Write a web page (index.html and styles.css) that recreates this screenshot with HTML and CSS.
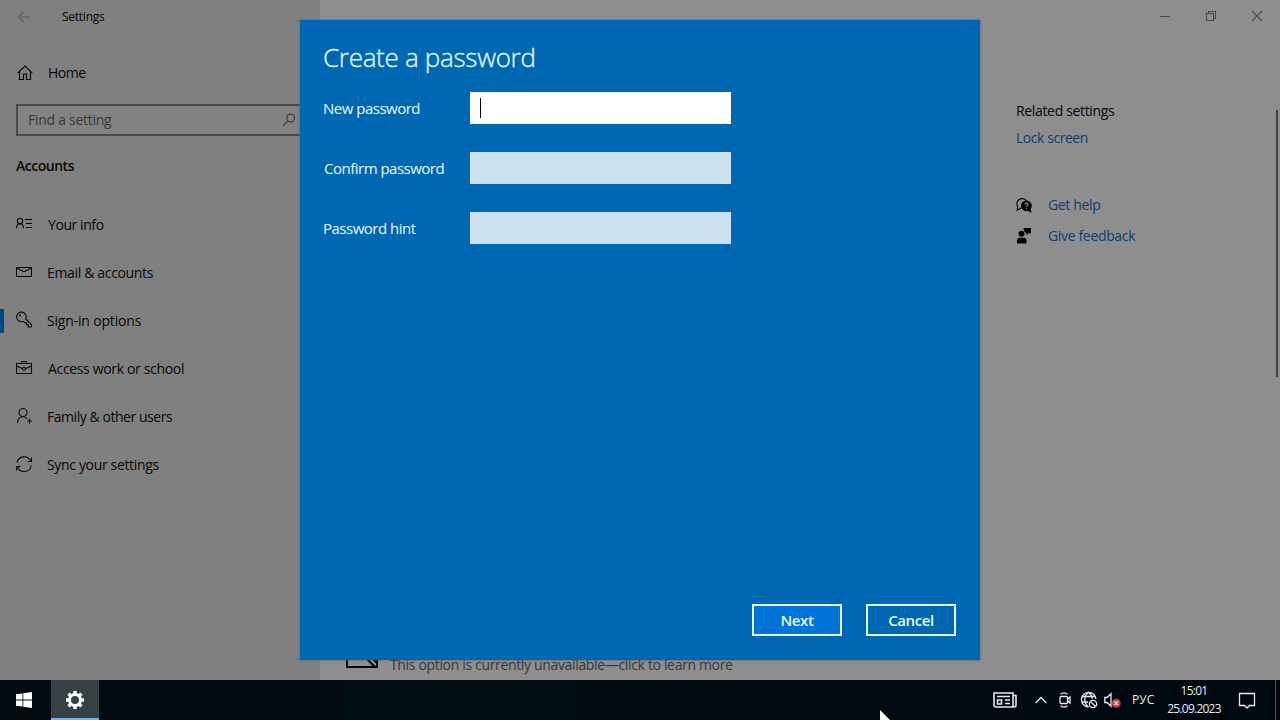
FILE: index.html
```html
<!DOCTYPE html>
<html lang="en">
<head>
    <meta charset="UTF-8">
    <meta name="viewport" content="width=device-width, initial-scale=1.0">
    <title>Settings</title>
    <link rel="stylesheet" href="styles.css">
</head>
<body>
<div class="window">
    <aside class="sidebar">
        <div class="title-bar">
            <svg class="back" width="14" height="12" viewBox="0 0 14 12"><path d="M13 6H1.5M6.5 1l-5 5 5 5"/></svg>
            <span class="app-name">Settings</span>
        </div>
        <a class="home" href="#">
            <svg width="16" height="16" viewBox="0 0 16 16"><path d="M.8 8L8 1l7.200 7M2.500 6.500v8h4V9h3v5.500h4v-8"/></svg>
            <span>Home</span>
        </a>
        <div class="search">
            <span>Find a setting</span>
            <svg width="14" height="14" viewBox="0 0 14 14"><circle cx="8.7" cy="5" r="3.9"/><path d="M5.8 7.8L1 12.8"/></svg>
        </div>
        <h2>Accounts</h2>
        <ul class="menu">
            <li><a href="#">
                <svg width="18" height="16" viewBox="0 0 18 16"><circle cx="4" cy="5" r="2.7"/><path d="M.5 12.3C.7 9.5 2 7.8 4 7.8s3.400 1.700 3.600 4.500M9 3.500h7M10 7.500h6M10 11.500h6"/></svg>
                <span class="info">Your info</span>
            </a></li>
            <li><a href="#">
                <svg width="18" height="16" viewBox="0 0 18 16"><path d="M.5 3.500h15v9H.5zM.5 4l7.500 3.700L15.500 4"/></svg>
                <span class="email">Email &amp; accounts</span>
            </a></li>
            <li class="active"><a href="#">
                <svg width="18" height="18" viewBox="0 0 18 18"><path d="M9.700 8l5.800 5.500v2.500h-3.200v-2.200h-1.800v-2h-2L7.300 10.300A4.800 4.800 0 1 1 9.700 8z"/><circle cx="4" cy="4.500" r=".6"/></svg>
                <span class="sign-in">Sign-in options</span>
            </a></li>
            <li><a href="#">
                <svg width="18" height="16" viewBox="0 0 18 16"><path d="M.5 3.500h15v10H.5zM5.500 3.500v-2h5v2M.5 6l5.700 2.500M9.800 8.500L15.500 6"/><circle cx="8" cy="8.800" r="1.500"/></svg>
                <span class="work">Access work or school</span>
            </a></li>
            <li><a href="#">
                <svg width="18" height="18" viewBox="0 0 18 18"><circle cx="7" cy="5.500" r="4"/><path d="M1.500 16c.2-4 2.300-6.300 5.500-6.300 1.800 0 3.200.8 4.200 2.300M13.500 11.500v5M11 14h5"/></svg>
                <span class="family">Family &amp; other users</span>
            </a></li>
            <li><a href="#">
                <svg width="18" height="18" viewBox="0 0 18 18"><path d="M1 7.500a7.200 7.200 0 0 1 13.700-1.200M15.500 2.500v4h-4M15.300 10.500A7.200 7.200 0 0 1 1.500 12M.5 15.500v-4h4"/></svg>
                <span class="sync">Sync your settings</span>
            </a></li>
        </ul>
    </aside>

    <main class="content">
        <div class="controls">
            <svg width="12" height="12" viewBox="0 0 12 12"><path d="M1 6.500h10"/></svg>
            <svg width="12" height="12" viewBox="0 0 12 12"><path d="M1.500 3.500h7v7h-7zM3.500 3.500v-2h7v7h-2"/></svg>
            <svg width="12" height="12" viewBox="0 0 12 12"><path d="M1 1l10 10M11 1L1 11"/></svg>
        </div>
        <div class="related">
            <h3>Related settings</h3>
            <a class="lock" href="#">Lock screen</a>
            <a class="help" href="#">
                <svg width="16" height="16" viewBox="0 0 16 16"><path class="line" d="M6 10.500L1 13.300l.7-3.500A5 5 0 1 1 10.500 4"/><path d="M10.300 3.500a5.300 5.300 0 1 0 1.500 10.400l3.700 1.800-.8-3.700a5.300 5.300 0 0 0-4.400-8.500z"/><path class="mark" d="M8.900 7.400c.2-1.800 3.100-1.600 3 .1 0 1.100-1.500 1.200-1.500 2.600M10.400 11.200v1.200"/></svg>
                <span>Get help</span>
            </a>
            <a class="feedback" href="#">
                <svg width="16" height="17" viewBox="0 0 16 17"><circle cx="5.500" cy="6.700" r="3"/><path d="M1 16.500v-2.800q0-3 3-3h3.500q3 0 3 3v2.800zM7.500 1H15v5.200h-2.500L10.300 8V6.200L8 4z"/></svg>
                <span>Give feedback</span>
            </a>
        </div>
        <div class="scrollbar"></div>
        <div class="picture-option">
            <svg width="32" height="24" viewBox="0 0 32 24"><path d="M1 1h30v22H1zM15 9l14 14M21 9l10 10"/></svg>
            <p>This option is currently unavailable—click to learn more</p>
        </div>
    </main>

    <form class="dialog">
        <h1>Create a password</h1>
        <div class="field focused">
            <label>New password</label>
            <div class="input"><i class="caret"></i></div>
        </div>
        <div class="field">
            <label class="confirm">Confirm password</label>
            <div class="input"></div>
        </div>
        <div class="field">
            <label>Password hint</label>
            <div class="input"></div>
        </div>
        <div class="buttons">
            <button type="button" class="next">Next</button>
            <button type="button">Cancel</button>
        </div>
    </form>
</div>

<footer class="taskbar">
    <div class="start">
        <svg width="16" height="16" viewBox="0 0 16 16"><path d="M0 2.300L6.500 1.400v6.200H0zM7.300 1.200L16 0v7.600H7.300zM0 8.400h6.500v6.200L0 13.700zM7.300 8.400H16V16l-8.700-1.200z"/></svg>
    </div>
    <div class="task">
        <svg width="20" height="20" viewBox="0 0 20 20"><circle class="ring" cx="10" cy="10" r="5.500"/><path class="teeth" d="M10 4.500V1M10 15.500V19M4.500 10H1M15.500 10H19M6.100 6.100L3.600 3.600M13.900 6.100l2.500-2.500M6.100 13.900l-2.500 2.500M13.900 13.900l2.500 2.500"/></svg>
    </div>
    <div class="tray">
        <svg class="news" width="24" height="16" viewBox="0 0 24 16"><path d="M1 1h19v14H3q-2 0-2-2zM20 3.500h3V13q0 2-2 2h-2M4 4.500h13M12 8h5M12 11.500h5M4.500 8h4v4h-4z"/></svg>
        <svg class="chevron" width="12" height="8" viewBox="0 0 12 8"><path d="M.7 7L6 1.500 11.300 7"/></svg>
        <svg class="meet" width="12" height="16" viewBox="0 0 12 16"><rect x="1" y="4.500" width="7.500" height="7" rx="1"/><path d="M8.500 7.200L11 5v6L8.500 8.800M1.500 2.300Q5 -.5 8.500 2.300M1.500 13.700Q5 16.500 8.500 13.700"/></svg>
        <svg class="globe" width="18" height="18" viewBox="0 0 18 18"><path d="M8.500 16A7.300 7.300 0 1 1 16 8M8.500 1.200c-5 4-5 10.500 0 14.800M8.500 1.200c2.500 2 3.600 4.300 3.700 6.500M1.700 5.500h13.600M1.700 11H8"/><circle cx="13" cy="13" r="3.700"/><path d="M10.500 10.500l5 5"/></svg>
        <svg class="sound" width="17" height="16" viewBox="0 0 17 16"><path d="M.8 5.500H3l4-3.800v12.500L3 10.500H.8z"/><circle class="bad" cx="12.200" cy="11.200" r="4.500"/><path d="M10.400 9.400l3.600 3.600M14 9.400L10.400 13"/></svg>
        <span class="lang">РУС</span>
        <div class="clock">
            <span class="time">15:01</span>
            <span class="date">25.09.2023</span>
        </div>
        <svg class="notes" width="18" height="17" viewBox="0 0 18 17"><path d="M1.500 1.500h15v12h-5L9 16l-2.500-2.500h-5z"/></svg>
        <div class="show-desktop"></div>
    </div>
</footer>
<svg class="cursor" width="12" height="12" viewBox="0 0 12 12"><path d="M0 0l12 12H0z"/></svg>
</body>
</html>
```
FILE: styles.css
```css
* {
    margin: 0;
    padding: 0;
    box-sizing: border-box;
}

body {
    width: 1280px;
    height: 720px;
    overflow: hidden;
    position: relative;
    display: flex;
    flex-direction: column;
    font-family: "Open Sans", "Noto Sans", sans-serif;
    font-size: 14px;
    line-height: 20px;
    letter-spacing: -0.34px;
    color: #080808;
    background-color: #000;
}

a {
    color: inherit;
    text-decoration: none;
}

span, h1, h2, h3, p, label {
    white-space: nowrap;
}

svg {
    display: block;
    flex: none;
    fill: none;
    stroke: currentColor;
    stroke-width: 1.1;
}

/* Settings window, dimmed behind the dialog */
.window {
    position: relative;
    display: flex;
    height: 680px;
}

.sidebar {
    width: 320px;
    background-color: #808080;
}

.title-bar {
    display: flex;
    align-items: center;
    height: 32px;
    padding: 1px 0 0 17px;
    font-size: 12px;
}

.back {
    color: #5b5b5b;
}

.app-name {
    margin-left: 31px;
    letter-spacing: -0.25px;
}

.home {
    display: flex;
    align-items: center;
    height: 40px;
    margin-top: 21px;
    padding-left: 17px;
    gap: 15px;
    letter-spacing: -0.5px;
}

.search {
    display: flex;
    align-items: center;
    justify-content: space-between;
    height: 32px;
    margin: 11px 12px 0 16px;
    padding: 0 10px;
    border: 2px solid #494949;
    background-color: #838383;
    color: #393939;
    letter-spacing: -0.28px;
}

.sidebar h2 {
    margin: 20px 0 0 16px;
    font-size: 14px;
    font-weight: 600;
    letter-spacing: -0.48px;
}

.menu {
    list-style: none;
    margin-top: 25px;
}

.menu a {
    display: flex;
    align-items: center;
    height: 48px;
    padding-left: 16px;
    gap: 13px;
}

.menu svg {
    margin-top: -2px;
}

.menu .active {
    background: linear-gradient(#004a84, #004a84) 0 12px / 4px 24px no-repeat;
}

.menu .info {
    margin-left: 1px;
    letter-spacing: -0.42px;
}

.menu .sign-in {
    letter-spacing: -0.18px;
}

.menu .work {
    margin-left: 1px;
}

.menu .family {
    letter-spacing: -0.45px;
}

.content {
    position: relative;
    flex: 1;
    background-color: #8e8e8e;
}

.controls {
    display: flex;
    justify-content: flex-end;
    align-items: center;
    gap: 34px;
    height: 32px;
    padding-right: 17px;
    color: #4c4c4c;
    stroke-width: 1;
}

.related {
    margin: 69px 0 0 696px;
}

.related h3 {
    font-size: 14px;
    font-weight: 400;
    color: #080808;
}

.related a {
    display: flex;
    align-items: center;
    color: #103f6e;
}

.related .lock {
    margin-top: 7px;
    letter-spacing: -0.45px;
}

.related .help {
    margin-top: 47px;
    gap: 16px;
}

.related .feedback {
    margin-top: 11px;
    gap: 16px;
}

.related svg {
    color: #050505;
    fill: #050505;
    stroke: none;
}

.related .line {
    fill: none;
    stroke: #050505;
}

.related .mark {
    fill: none;
    stroke: #8e8e8e;
}

.related .feedback svg {
    margin-top: -1px;
}

.scrollbar {
    position: absolute;
    top: 110px;
    right: 2px;
    width: 2px;
    height: 267px;
    background-color: #424242;
}

/* Last visible row, mostly hidden by the dialog */
.picture-option {
    position: absolute;
    left: 26px;
    bottom: 5px;
    display: flex;
    align-items: center;
    gap: 12px;
    color: #373737;
}

.picture-option svg {
    margin-top: -18px;
    color: #050505;
    stroke-width: 2;
}

/* Dialog */
.dialog {
    position: absolute;
    left: 300px;
    top: 20px;
    display: flex;
    flex-direction: column;
    width: 680px;
    height: 640px;
    padding: 19px 24px 24px 23px;
    background-color: #0067b3;
    box-shadow: 0 0 2px #2c6795;
    color: #e8f8ff;
}

.dialog h1 {
    height: 53px;
    font-size: 26px;
    font-weight: 300;
    line-height: 36px;
    letter-spacing: -0.3px;
    -webkit-text-stroke: 0.3px #e8f8ff;
}

.field {
    display: flex;
    align-items: center;
    height: 32px;
    margin-bottom: 28px;
    font-size: 15px;
    letter-spacing: -0.5px;
}

.field label {
    width: 147px;
}

.field .confirm {
    padding-left: 1px;
}

.input {
    width: 261px;
    height: 32px;
    padding: 6px 10px;
    background-color: #cce1ee;
}

.focused .input {
    background-color: #fff;
}

.caret {
    display: block;
    width: 1px;
    height: 20px;
    background-color: #000;
}

.buttons {
    display: flex;
    justify-content: flex-end;
    gap: 24px;
    margin-top: auto;
}

.buttons button {
    width: 90px;
    height: 32px;
    border: 2px solid #e8faff;
    background-color: transparent;
    color: #e8faff;
    font-family: inherit;
    font-size: 15px;
    font-weight: 600;
    letter-spacing: -0.4px;
}

.buttons .next {
    background-color: #0074d9;
}

/* Taskbar */
.taskbar {
    display: flex;
    height: 40px;
    background: linear-gradient(90deg, #020a10, #010e12 35%, #000810);
    color: #e6eaec;
}

.start {
    display: flex;
    align-items: center;
    justify-content: center;
    width: 48px;
    margin-right: 3px;
}

.start svg {
    fill: #fff;
    stroke: none;
}

.task {
    display: flex;
    align-items: center;
    justify-content: center;
    width: 48px;
    padding-top: 2px;
    background-color: #354145;
    border-bottom: 2px solid #78b4e5;
    color: #fff;
}

.ring {
    stroke-width: 3;
}

.teeth {
    stroke-width: 3.4;
}

.tray {
    display: flex;
    align-items: center;
    margin-left: auto;
    font-size: 12px;
}

.tray svg {
    stroke-width: 1.3;
}

.tray .news {
    stroke-width: 1.6;
}

.chevron {
    margin-left: 18px;
}

.meet {
    margin-left: 12px;
}

.globe {
    margin-left: 9px;
}

.sound {
    margin-left: 6px;
}

.sound .bad {
    fill: #c73e4c;
    stroke: none;
}

.lang {
    width: 23px;
    margin-left: 11px;
    letter-spacing: 0;
}

.clock {
    display: flex;
    flex-direction: column;
    align-items: center;
    width: 56px;
    margin-left: 11px;
    line-height: 18px;
    letter-spacing: -0.75px;
}

.notes {
    margin-left: 16px;
}

.show-desktop {
    width: 5px;
    height: 40px;
    margin-left: 19px;
    border-left: 1px solid #4c5357;
}

.cursor {
    position: absolute;
    left: 880px;
    top: 710px;
    fill: #fff;
    stroke: none;
}
```
